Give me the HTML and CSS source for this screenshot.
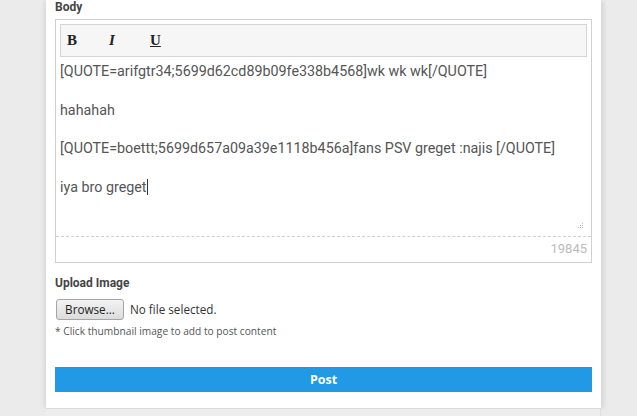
FILE: index.html
```html
<!DOCTYPE html>
<html>
<head>
<meta charset="utf-8">
<link rel="stylesheet" href="styles.css">
</head>
<body>
<div class="page">
  <div class="panel">
    <div class="label label-body">Body</div>
    <div class="editor">
      <div class="toolbar">
        <span class="tb tb-b">B</span>
        <span class="tb tb-i">I</span>
        <span class="tb tb-u">U</span>
      </div>
      <div class="textarea">
        <p>[QUOTE=arifgtr34;5699d62cd89b09fe338b4568]wk wk wk[/QUOTE]</p>
        <p>hahahah</p>
        <p>[QUOTE=boettt;5699d657a09a39e1118b456a]fans PSV greget :najis [/QUOTE]</p>
        <p>iya bro greget<span class="caret"></span></p>
        <svg class="grip" width="7" height="7" viewBox="0 0 7 7">
          <rect x="5" y="1" width="1" height="1" fill="#bbb"/>
          <rect x="3" y="3" width="1" height="1" fill="#bbb"/>
          <rect x="5" y="3" width="1" height="1" fill="#bbb"/>
          <rect x="1" y="5" width="1" height="1" fill="#bbb"/>
          <rect x="3" y="5" width="1" height="1" fill="#bbb"/>
          <rect x="5" y="5" width="1" height="1" fill="#bbb"/>
        </svg>
      </div>
      <div class="counter">19845</div>
    </div>
    <div class="label label-upload">Upload Image</div>
    <div class="file-row">
      <button class="browse">Browse...</button>
      <span class="nofile">No file selected.</span>
    </div>
    <div class="note">* Click thumbnail image to add to post content</div>
    <button class="post">Post</button>
  </div>
  <div class="next"></div>
</div>
</body>
</html>
```

FILE: styles.css
```css
html, body {
  margin: 0;
  padding: 0;
  background: #ebebeb;
}
.page {
  width: 637px;
  height: 416px;
  overflow: hidden;
}
.panel {
  margin-left: 46px;
  width: 555px;
  box-sizing: border-box;
  padding: 0 9px 17px 9px;
  background: #fff;
  box-shadow: -3px 0 4px -1px rgba(0,0,0,0.08), 4px 0 4px -1px rgba(0,0,0,0.09);
  border-bottom: 1px solid #dadada;
  height: 409px;
}
.label {
  font-family: Roboto, "Liberation Sans", sans-serif;
  font-weight: bold;
  font-size: 12px;
  color: #444;
  line-height: 14px;
}
.label-body {
  padding-top: 0;
  margin-bottom: 5px;
}
.editor {
  border: 1px solid #d0d0d0;
  padding: 4px 4px 0 4px;
}
.toolbar {
  height: 31px;
  border: 1px solid #d4d4d4;
  background: #f6f6f6;
  display: flex;
  align-items: center;
  padding-left: 6px;
  gap: 0;
}
.tb {
  font-family: "Liberation Serif", "Times New Roman", serif;
  font-weight: bold;
  font-size: 15px;
  color: #222;
  width: 42px;
}
.tb-i { font-style: italic; width: 41px; }
.tb-u { text-decoration: underline; }
.textarea {
  position: relative;
  height: 179px;
  box-sizing: border-box;
  padding: 5px 0 0 0;
  font-family: Roboto, "Liberation Sans", sans-serif;
  font-size: 14.3px;
  line-height: 19.3px;
  color: #555;
}
.textarea p {
  margin: 0 0 19.3px 0;
}
.caret {
  display: inline-block;
  width: 1px;
  height: 16px;
  background: #333;
  vertical-align: -3px;
}
.grip {
  position: absolute;
  right: 3px;
  bottom: 7px;
}
.counter {
  border-top: 1px dashed #d0d0d0;
  margin: 0 -4px;
  padding-right: 4px;
  height: 25px;
  line-height: 24px;
  text-align: right;
  font-family: Roboto, "Liberation Sans", sans-serif;
  font-size: 13px;
  color: #bbb;
}
.label-upload {
  margin-top: 13px;
  line-height: 14px;
}
.file-row {
  display: flex;
  align-items: center;
  margin-top: 8px;
  height: 22px;
}
.browse {
  margin: 0 0 0 1px;
  height: 21px;
  width: 68px;
  padding: 0;
  border: 1px solid #a5a5a5;
  border-radius: 3px;
  background: linear-gradient(#f3f3f3, #dcdcdc);
  font-family: "Open Sans", "Liberation Sans", sans-serif;
  font-size: 11.7px;
  color: #222;
}
.nofile {
  margin-left: 6px;
  font-family: "Open Sans", "Liberation Sans", sans-serif;
  font-size: 11.7px;
  color: #333;
}
.note {
  margin-top: 4px;
  font-family: "Open Sans", "Liberation Sans", sans-serif;
  font-size: 10.2px;
  color: #555;
  line-height: 15px;
}
.post {
  display: block;
  width: 100%;
  margin-top: 28px;
  height: 25px;
  border: none;
  background: #2299e5;
  color: #fff;
  font-family: "Open Sans", "Liberation Sans", sans-serif;
  font-weight: bold;
  font-size: 12.5px;
  padding: 0;
}
.next {
  margin-left: 46px;
  width: 555px;
  height: 10px;
  background: #eeeeee;
  border-right: 1px solid #dedede;
  box-sizing: border-box;
}
```
